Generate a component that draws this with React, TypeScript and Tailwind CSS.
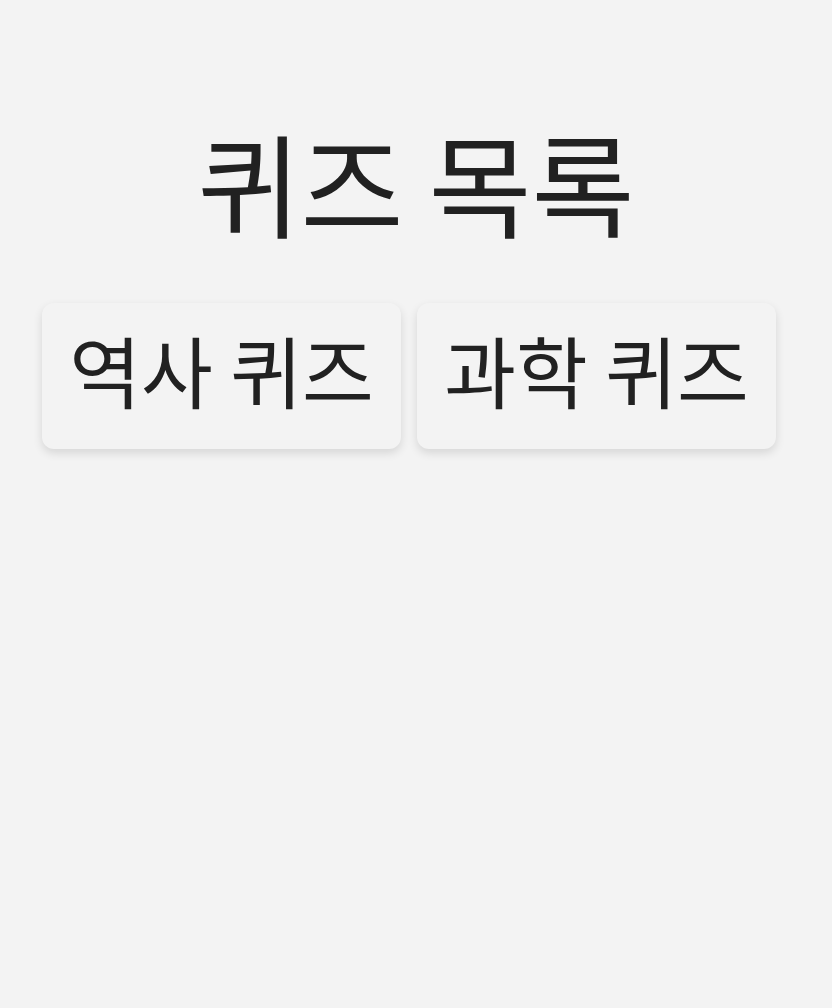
import React from "react";

export default function App() {
  const font = { fontFamily: '"Noto Sans CJK KR", "Noto Sans", sans-serif' };
  return (
    <div className="min-h-screen w-full bg-[#f3f3f3] text-[#212121]" style={font}>
      <div className="pt-[125px] flex justify-center">
        <h1 className="text-[112px] leading-[1] font-normal">퀴즈 목록</h1>
      </div>
      <div className="flex gap-4 pl-[42px] mt-[66px]">
        <button className="w-[359px] h-[146px] pb-[14px] rounded-xl bg-[#f3f3f3] shadow-[0_4px_10px_rgba(0,0,0,0.12)] text-[78px] leading-[1] text-[#212121] flex items-center justify-center">
          역사 퀴즈
        </button>
        <button className="w-[359px] h-[146px] pb-[14px] rounded-xl bg-[#f3f3f3] shadow-[0_4px_10px_rgba(0,0,0,0.12)] text-[78px] leading-[1] text-[#212121] flex items-center justify-center">
          과학 퀴즈
        </button>
      </div>
    </div>
  );
}
